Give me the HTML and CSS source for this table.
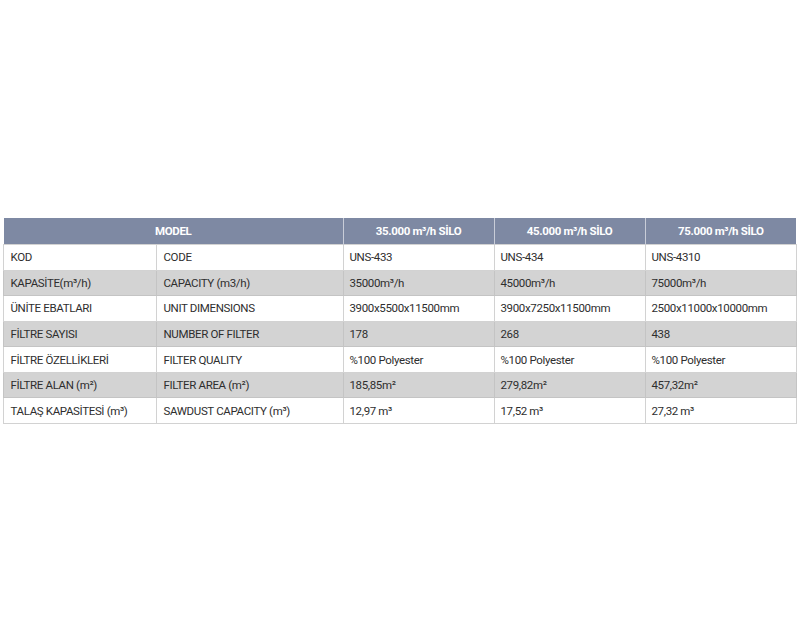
FILE: index.html
```html
<!DOCTYPE html>
<html lang="tr">
<head>
<meta charset="utf-8">
<title>Silo</title>
<link rel="stylesheet" href="styles.css">
</head>
<body>
<main class="page">
<table class="spec">
<colgroup>
<col class="c1"><col class="c2"><col class="c3"><col class="c4"><col class="c5">
</colgroup>
<thead>
<tr><th colspan="2">MODEL</th><th>35.000 m³/h SİLO</th><th>45.000 m³/h SİLO</th><th>75.000 m³/h SİLO</th></tr>
</thead>
<tbody>
<tr><td>KOD</td><td>CODE</td><td>UNS-433</td><td>UNS-434</td><td>UNS-4310</td></tr>
<tr class="alt"><td>KAPASİTE(m³/h)</td><td>CAPACITY (m3/h)</td><td>35000m³/h</td><td>45000m³/h</td><td>75000m³/h</td></tr>
<tr><td>ÜNİTE EBATLARI</td><td>UNIT DIMENSIONS</td><td>3900x5500x11500mm</td><td>3900x7250x11500mm</td><td>2500x11000x10000mm</td></tr>
<tr class="alt"><td>FİLTRE SAYISI</td><td>NUMBER OF FILTER</td><td>178</td><td>268</td><td>438</td></tr>
<tr><td>FİLTRE ÖZELLİKLERİ</td><td>FILTER QUALITY</td><td>%100 Polyester</td><td>%100 Polyester</td><td>%100 Polyester</td></tr>
<tr class="alt"><td>FİLTRE ALAN (m²)</td><td>FILTER AREA (m²)</td><td>185,85m²</td><td>279,82m²</td><td>457,32m²</td></tr>
<tr><td>TALAŞ KAPASİTESİ (m³)</td><td>SAWDUST CAPACITY (m³)</td><td>12,97 m³</td><td>17,52 m³</td><td>27,32 m³</td></tr>
</tbody>
</table>
</main>
</body>
</html>
```

FILE: styles.css
```css
html, body {
  margin: 0;
  padding: 0;
  background: #ffffff;
}
.page {
  height: 640px;
  display: flex;
  align-items: center;
  justify-content: center;
  padding-top: 2px;
  box-sizing: border-box;
}
.spec {
  width: 792px;
  border-collapse: collapse;
  table-layout: fixed;
  font-family: "Roboto", "Liberation Sans", sans-serif;
  font-size: 11.5px;
  letter-spacing: -0.35px;
  color: #2e2e2e;
}
.c1 { width: 153px; }
.c2 { width: 186px; }
.c3 { width: 151px; }
.c4 { width: 151px; }
.c5 { width: 151px; }
.spec th {
  background: #7e89a3;
  color: #ffffff;
  font-weight: 700;
  height: 26px;
  padding: 0 6px;
  text-align: center;
  border-left: 1px solid #c9cdd8;
}
.spec th:first-child { border-left: none; }
.spec td {
  height: 24.6px;
  padding: 0 6px;
  border: 1px solid #d2d2d2;
  white-space: nowrap;
}
.spec tr.alt td {
  background: #d3d3d3;
  border-color: #c4c4c4;
}
```
